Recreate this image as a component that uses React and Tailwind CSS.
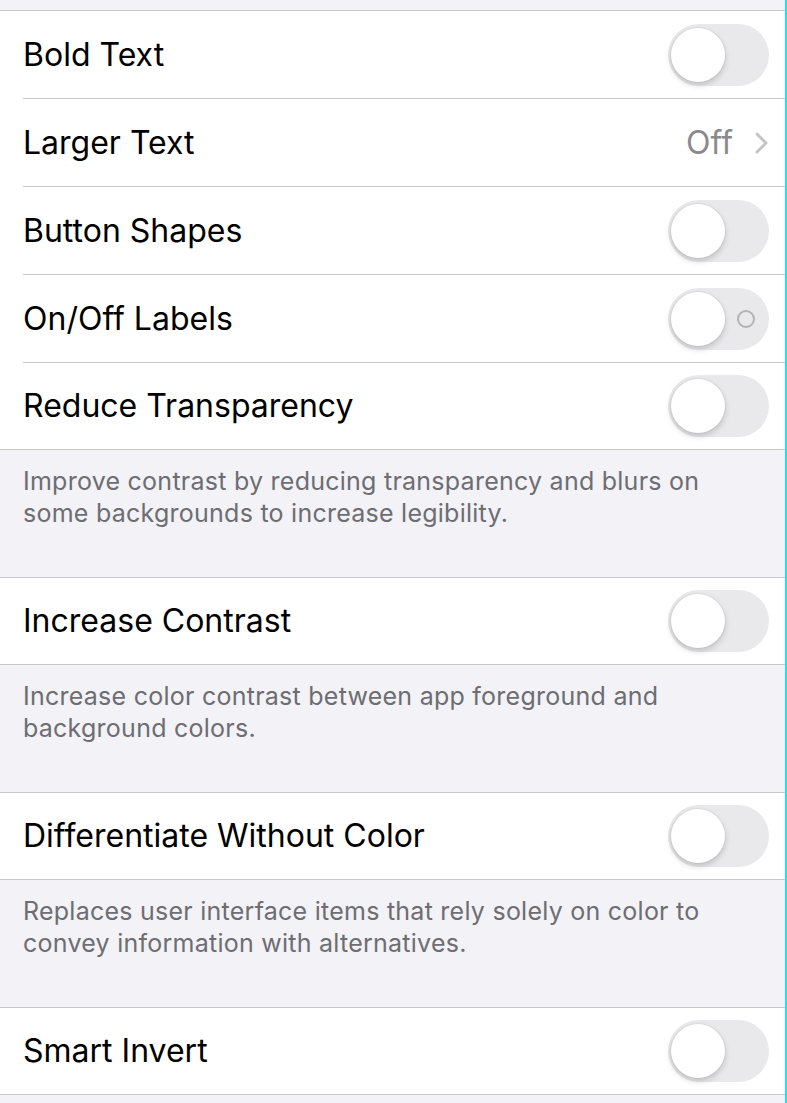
import React from 'react';

function Toggle({ labels }) {
  return (
    <span className="relative inline-block w-[101px] h-[62px] rounded-full bg-[#e9e9eb] shrink-0">
      <span className="absolute left-[3px] top-[4px] w-[54px] h-[54px] rounded-full bg-white shadow-[0_3px_6px_rgba(0,0,0,0.18),0_0_0_1px_rgba(0,0,0,0.04)]" />
      {labels && (
        <span className="absolute left-[69px] top-[22px] w-[18px] h-[18px] rounded-full border-2 border-[#b3b3b5]" />
      )}
    </span>
  );
}

function Row({ label, last, children }) {
  return (
    <div className={`flex items-center pl-[23px] ${last ? 'h-[86px]' : 'h-[88px]'}`}>
      <div className={`flex items-center justify-between h-full flex-1 pr-[16px] ${last ? '' : 'border-b border-[#c8c7cc]'}`}>
        <span className="text-[32px] text-black">{label}</span>
        {children}
      </div>
    </div>
  );
}

function Group({ children }) {
  return <div className="bg-white border-y border-[#c8c7cc]">{children}</div>;
}

function Footer({ children }) {
  return (
    <div className="h-[127px] px-[23px] pt-[15px] text-[25px] leading-[32px] tracking-[0.25px] text-[#6d6d72]">
      {children}
    </div>
  );
}

export default function App() {
  return (
    <div
      className="w-[787px] h-[1103px] overflow-hidden bg-[#f2f2f7] border-r-2 border-[#22e0f0]"
      style={{ fontFamily: 'Inter, "Noto Sans", sans-serif' }}
    >
      <div className="h-[10px]" />
      <Group>
        <Row label="Bold Text"><Toggle /></Row>
        <Row label="Larger Text">
          <span className="flex items-center gap-[22px] text-[32px] text-[#8a8a8e]">
            Off
            <svg width="14" height="22" viewBox="0 0 14 22" fill="none">
              <path d="M2 2l9 9-9 9" stroke="#c4c4c7" strokeWidth="3" strokeLinecap="round" strokeLinejoin="round" />
            </svg>
          </span>
        </Row>
        <Row label="Button Shapes"><Toggle /></Row>
        <Row label="On/Off Labels"><Toggle labels /></Row>
        <Row label="Reduce Transparency" last><Toggle /></Row>
      </Group>
      <Footer>
        Improve contrast by reducing transparency and blurs on some backgrounds to increase legibility.
      </Footer>
      <Group>
        <Row label="Increase Contrast" last><Toggle /></Row>
      </Group>
      <Footer>
        Increase color contrast between app foreground and background colors.
      </Footer>
      <Group>
        <Row label="Differentiate Without Color" last><Toggle /></Row>
      </Group>
      <Footer>
        Replaces user interface items that rely solely on color to convey information with alternatives.
      </Footer>
      <Group>
        <Row label="Smart Invert" last><Toggle /></Row>
      </Group>
    </div>
  );
}
